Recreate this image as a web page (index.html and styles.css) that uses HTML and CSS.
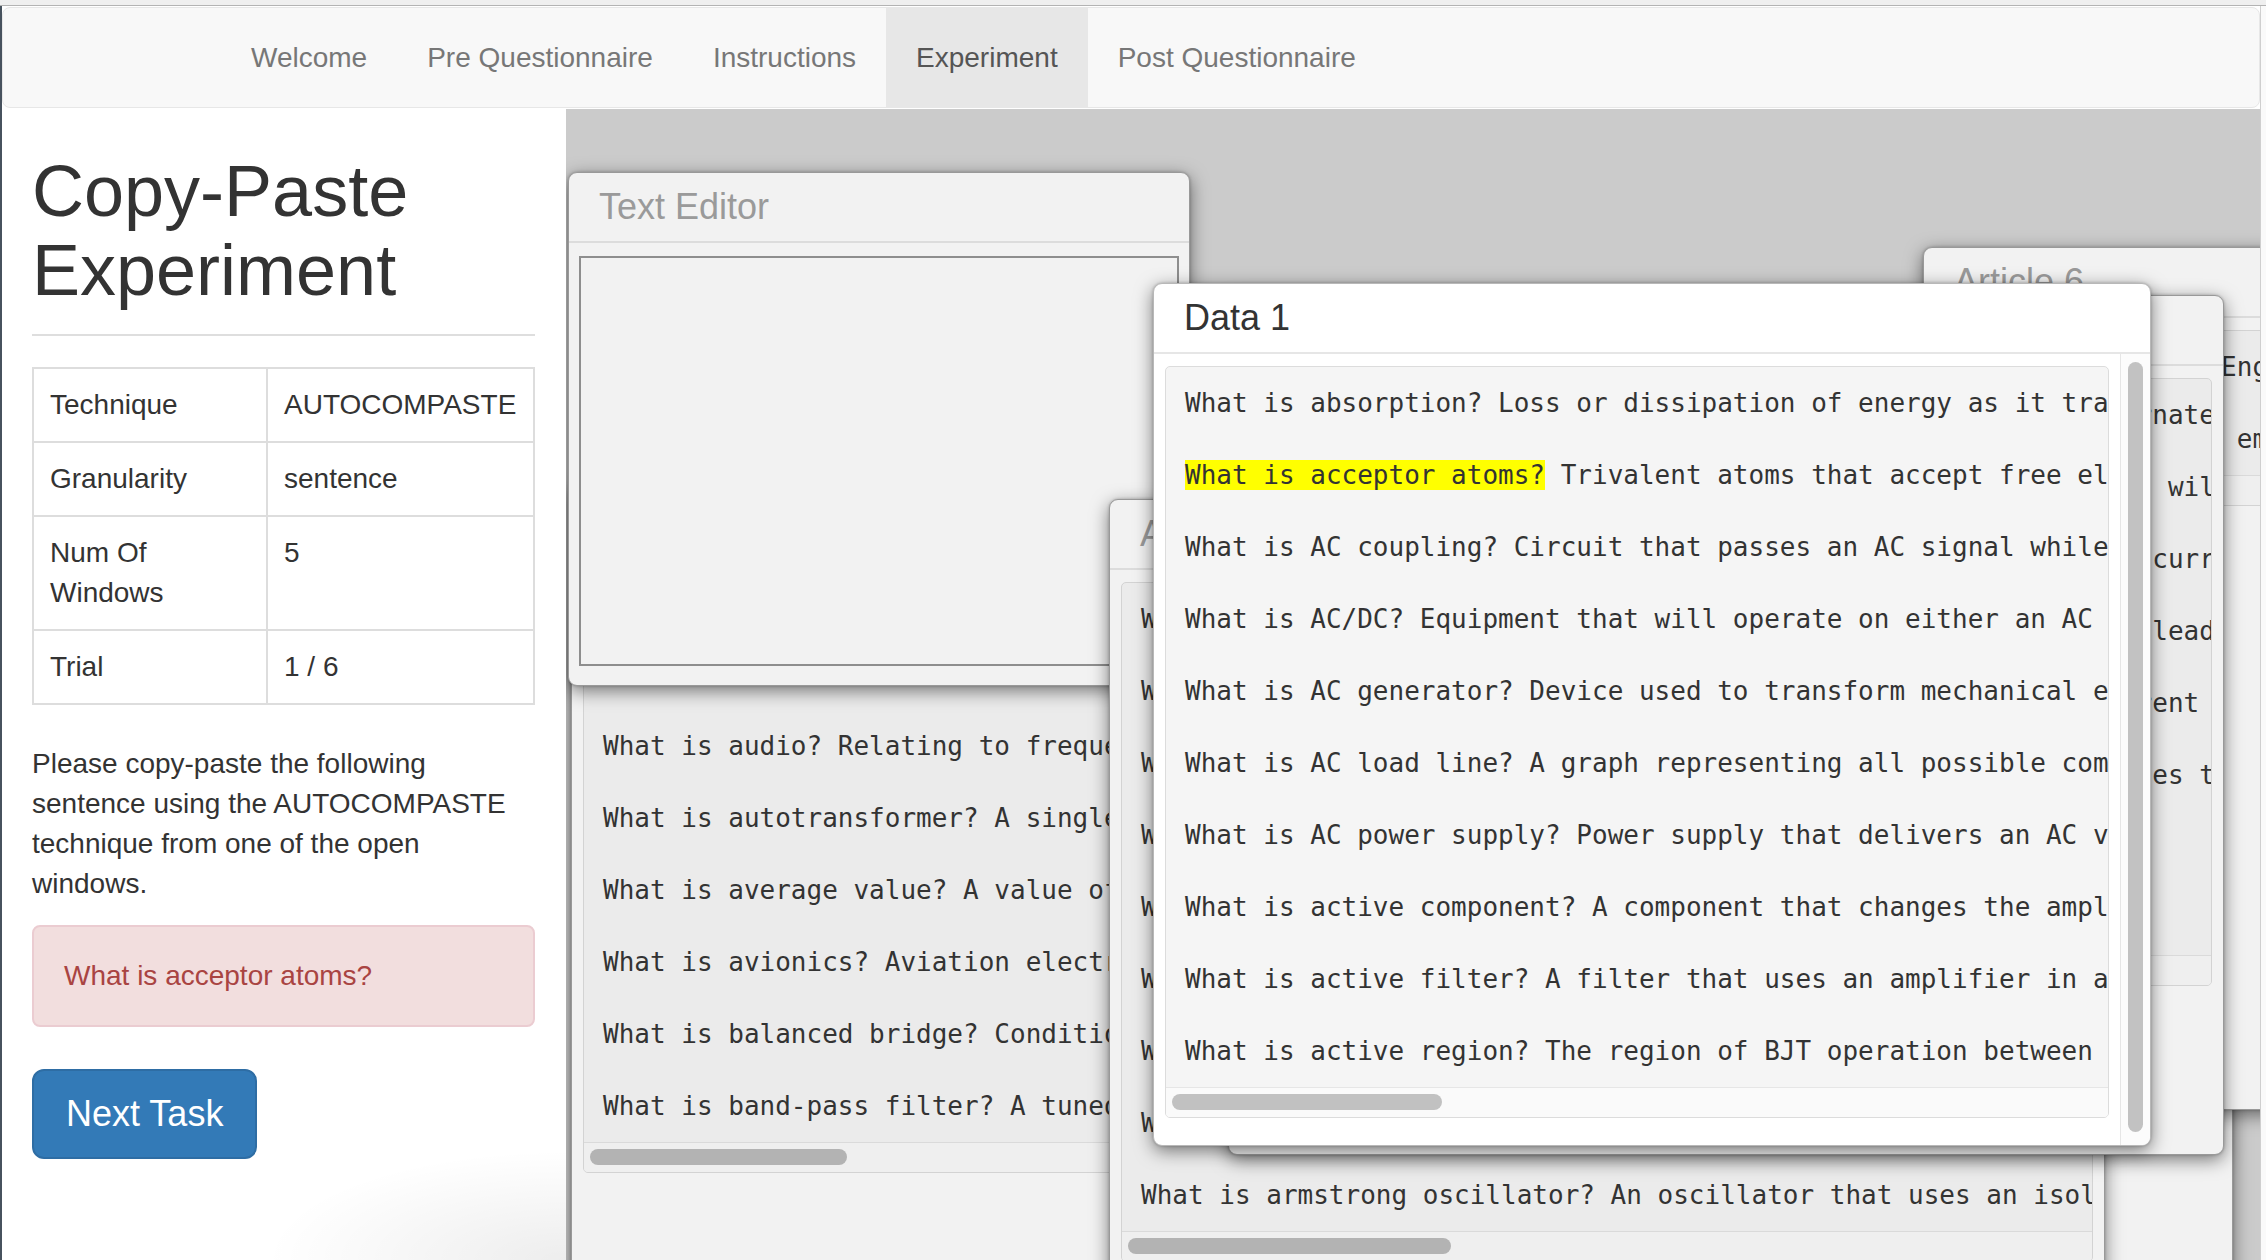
FILE: index.html
```html
<!DOCTYPE html>
<html lang="en">
<head>
<meta charset="utf-8">
<title>Copy-Paste Experiment</title>
<link rel="stylesheet" href="styles.css">
</head>
<body>
<div class="topbar"></div>
<div class="page">
  <nav class="navbar">
    <ul class="nav">
      <li><a>Welcome</a></li>
      <li><a>Pre Questionnaire</a></li>
      <li><a>Instructions</a></li>
      <li class="active"><a>Experiment</a></li>
      <li><a>Post Questionnaire</a></li>
    </ul>
  </nav>
  <div class="main">
    <aside class="side">
      <h1 class="title">Copy-Paste Experiment</h1>
      <hr class="rule">
      <table class="info">
        <colgroup><col class="c1"><col></colgroup>
        <tr><td>Technique</td><td class="val">AUTOCOMPASTE</td></tr>
        <tr><td>Granularity</td><td class="val">sentence</td></tr>
        <tr><td>Num Of Windows</td><td class="val">5</td></tr>
        <tr><td>Trial</td><td class="val">1 / 6</td></tr>
      </table>
      <p class="instr">Please copy-paste the following sentence using the AUTOCOMPASTE technique from one of the open windows.</p>
      <div class="alert">What is acceptor atoms?</div>
      <button class="btn">Next Task</button>
    </aside>

    <section class="desk">
      <div class="win w-f">
        <div class="win-head">Article 5</div>
        <div class="win-body"></div>
      </div>

      <div class="win w-d">
        <div class="win-head">Article 6</div>
        <div class="win-body">
          <div class="list">
            <div class="line">What is testing? Engineering verification of a design.</div>
            <div class="line">What is a ray? An emission of light energy.</div>
            <div class="hbar"><div class="thumb" style="width:240px"></div></div>
          </div>
        </div>
      </div>

      <div class="win w-b">
        <div class="win-head">Article 1</div>
        <div class="win-body">
          <div class="list">
            <div class="line">What is attenuation? A reduction in the level of a signal.</div>
            <div class="line">What is atom? The smallest unit of an element.</div>
            <div class="line">What is audio? Relating to frequencies within human hearing.</div>
            <div class="line">What is autotransformer? A single winding transformer.</div>
            <div class="line">What is average value? A value of a waveform over time.</div>
            <div class="line">What is avionics? Aviation electronics.</div>
            <div class="line">What is balanced bridge? Condition of a bridge circuit.</div>
            <div class="line">What is band-pass filter? A tuned circuit passing a band.</div>
            <div class="hbar"><div class="thumb" style="width:257px"></div></div>
          </div>
        </div>
      </div>

      <div class="win w-te">
        <div class="win-head">Text Editor</div>
        <div class="te-body">
          <textarea class="te-area"></textarea>
        </div>
      </div>

      <div class="win w-c">
        <div class="win-head">Article 2</div>
        <div class="win-body">
          <div class="list">
            <div class="line">What is alternation? One half of a complete cycle.</div>
            <div class="line">What is ammeter? A meter used to measure current.</div>
            <div class="line">What is amp-hour? A unit of battery capacity.</div>
            <div class="line">What is amplification? Increasing signal strength.</div>
            <div class="line">What is amplifier? A device that increases a signal.</div>
            <div class="line">What is amplitude? The magnitude of a signal.</div>
            <div class="line">What is analog? A continuously variable quantity.</div>
            <div class="line">What is AND gate? A logic gate with multiple inputs.</div>
            <div class="line">What is armstrong oscillator? An oscillator that uses an isolation transformer.</div>
            <div class="hbar"><div class="thumb" style="width:323px"></div></div>
          </div>
        </div>
      </div>

      <div class="win w-e">
        <div class="win-head">Article 4</div>
        <div class="win-body">
          <div class="list">
            <div class="line">What is alternating current? Current that swings in alternate directions.</div>
            <div class="line">What is an ammeter? An instrument to measure current that will be in series.</div>
            <div class="line">What is ampere? Unit of measure for the flow of electric current.</div>
            <div class="line">What is a phase angle? Angle by which voltage may lag or lead current.</div>
            <div class="line">What is amplitude? The peak value of any alternating current wave.</div>
            <div class="line">What is analog? A signal whose amplitude continually varies through time.</div>
            <div class="line">What is anode? The positive electrode of a device.</div>
            <div class="line">What is antenna? A device that radiates radio waves.</div>
            <div class="hbar"><div class="thumb" style="width:290px"></div></div>
          </div>
        </div>
      </div>

      <div class="win w-data active">
        <div class="win-head">Data 1</div>
        <div class="win-body">
          <div class="list">
            <div class="line">What is absorption? Loss or dissipation of energy as it travels.</div>
            <div class="line"><span class="hl">What is acceptor atoms?</span> Trivalent atoms that accept free electrons.</div>
            <div class="line">What is AC coupling? Circuit that passes an AC signal while blocking DC.</div>
            <div class="line">What is AC/DC? Equipment that will operate on either an AC or DC source.</div>
            <div class="line">What is AC generator? Device used to transform mechanical energy.</div>
            <div class="line">What is AC load line? A graph representing all possible combinations.</div>
            <div class="line">What is AC power supply? Power supply that delivers an AC voltage.</div>
            <div class="line">What is active component? A component that changes the amplitude.</div>
            <div class="line">What is active filter? A filter that uses an amplifier in addition.</div>
            <div class="line">What is active region? The region of BJT operation between saturation.</div>
            <div class="hbar"><div class="thumb" style="width:270px"></div></div>
          </div>
          <div class="vbar"><div class="vthumb"></div></div>
        </div>
      </div>
    </section>
  </div>
</div>
</body>
</html>
```

FILE: styles.css
```css
html, body {
  margin: 0;
  padding: 0;
}
body {
  width: 2266px;
  height: 1260px;
  overflow: hidden;
  background: #fafafa;
  font-family: "Liberation Sans", Arial, sans-serif;
  color: #333;
}
.topbar {
  height: 5px;
  background: #efefef;
  border-bottom: 1px solid #b3b3b3;
}
.page {
  width: 2258px;
  height: 1254px;
  border-left: 2px solid #47525e;
  border-right: 1px solid #cfcfcf;
  display: flex;
  flex-direction: column;
  background: #fff;
}
.navbar {
  flex: none;
  margin-top: 1px;
  margin-bottom: 1px;
  height: 101px;
  box-sizing: border-box;
  background: #f8f8f8;
  border: 1px solid #e7e7e7;
  border-radius: 8px;
  padding-left: 218px;
}
.nav {
  list-style: none;
  margin: 0;
  padding: 0;
  display: flex;
  height: 99px;
}
.nav li a {
  display: block;
  padding: 0 30px;
  line-height: 99px;
  font-size: 28px;
  color: #777;
}
.nav li.active a {
  background: #e7e7e7;
  color: #555;
}
.main {
  flex: 1;
  display: flex;
  min-height: 0;
}
.side {
  flex: none;
  width: 564px;
  box-sizing: border-box;
  padding: 0 31px 0 30px;
  background: radial-gradient(ellipse 300px 110px at 100% 100%, rgba(0,0,0,0.07), rgba(0,0,0,0)) , #fff;
}
.title {
  margin: 43px 0 0;
  font-size: 72px;
  line-height: 79px;
  font-weight: 400;
  color: #333;
}
.rule {
  margin: 24px 0 31px;
  border: 0;
  border-top: 2px solid #dedede;
  height: 0;
}
.info {
  width: 100%;
  table-layout: fixed;
  border-collapse: collapse;
  border: 2px solid #dddddd;
  margin-bottom: 39px;
  font-size: 28px;
  line-height: 40px;
}
.info col.c1 {
  width: 234px;
}
.info td {
  border: 2px solid #dddddd;
  padding: 16px;
  vertical-align: top;
  color: #333;
}
.info td.val {
  white-space: nowrap;
}
.instr {
  margin: 0 0 21px;
  font-size: 28px;
  line-height: 40px;
  color: #333;
}
.alert {
  padding: 29px 30px;
  border: 2px solid #ebccd1;
  border-radius: 8px;
  background: #f2dede;
  color: #a94442;
  font-size: 28px;
  line-height: 40px;
  margin-bottom: 42px;
}
.btn {
  display: block;
  padding: 19px 32px;
  border: 2px solid #2e6da4;
  border-radius: 12px;
  background: #337ab7;
  color: #fff;
  font-family: "Liberation Sans", Arial, sans-serif;
  font-size: 36px;
  line-height: 48px;
}

/* desktop of windows */
.desk {
  flex: 1;
  position: relative;
  overflow: hidden;
  background: #cbcbcb;
}
.win {
  position: absolute;
  box-sizing: border-box;
  display: flex;
  flex-direction: column;
  border: 1px solid #999;
  border-radius: 9px;
  background: #f2f2f2;
  box-shadow: 0 5px 18px rgba(0,0,0,0.5), 0 0 3px rgba(0,0,0,0.25);
  overflow: hidden;
}
.win-head {
  flex: none;
  height: 68px;
  line-height: 68px;
  padding: 0 30px;
  border-bottom: 2px solid #dcdcdc;
  font-size: 36px;
  color: #9a9a9a;
  white-space: nowrap;
  overflow: hidden;
}
.win-body {
  flex: 1;
  display: flex;
  align-items: flex-start;
  min-height: 0;
}
.list {
  flex: 1;
  min-width: 0;
  margin: 12px 11px;
  border: 1px solid #d3d3d3;
  border-radius: 5px;
  background: #ebebeb;
  overflow: hidden;
}
.line {
  height: 72px;
  padding-left: 19px;
  font-family: "DejaVu Sans Mono", monospace;
  font-size: 26px;
  line-height: 72px;
  color: #333;
  white-space: pre;
  overflow: hidden;
}
.hl {
  background: #ffff00;
}
.hbar {
  height: 30px;
  box-sizing: border-box;
  border-top: 1px solid #dadada;
  background: #efefef;
  padding: 6px 0 0 6px;
}
.thumb {
  height: 16px;
  border-radius: 8px;
  background: #b3b3b3;
}
.vbar {
  align-self: stretch;
  flex: none;
  width: 30px;
  box-sizing: border-box;
  border-left: 1px solid #e6e6e6;
  background: #fcfcfc;
  padding: 8px 0 13px 7px;
}
.vthumb {
  width: 15px;
  height: 100%;
  border-radius: 8px;
  background: #c2c2c2;
}

/* active window */
.win.active {
  background: #fff;
  border-color: #b8b8b8;
}
.active .win-head {
  color: #333;
  border-bottom-color: #e6e6e6;
}
.active .list {
  background: #f5f5f5;
  border-color: #dcdcdc;
}
.active .hbar {
  background: #fafafa;
  border-top-color: #e6e6e6;
}
.active .thumb {
  background: #c1c1c1;
}

/* text editor */
.te-body {
  flex: 1;
  padding: 13px 10px 0;
}
.te-area {
  display: block;
  width: 100%;
  height: 410px;
  box-sizing: border-box;
  border: 2px solid #8e8e8e;
  background: #f2f2f2;
  resize: none;
  margin: 0;
  padding: 0;
}

/* window placement on the desk */
.w-te { left: 2px; top: 63px; width: 622px; height: 514px; z-index: 4; }
.w-b { left: 5px; top: 373px; width: 622px; height: 863px; z-index: 3; }
.w-c { left: 543px; top: 390px; width: 996px; height: 863px; z-index: 5; }
.w-d { left: 1357px; top: 138px; width: 997px; height: 863px; z-index: 2; }
.w-e { left: 662px; top: 186px; width: 996px; height: 860px; z-index: 6; }
.w-data { left: 587px; top: 174px; width: 998px; height: 863px; z-index: 7; }
.w-f { left: 1134px; top: 891px; width: 533px; height: 500px; z-index: 1; }
```
